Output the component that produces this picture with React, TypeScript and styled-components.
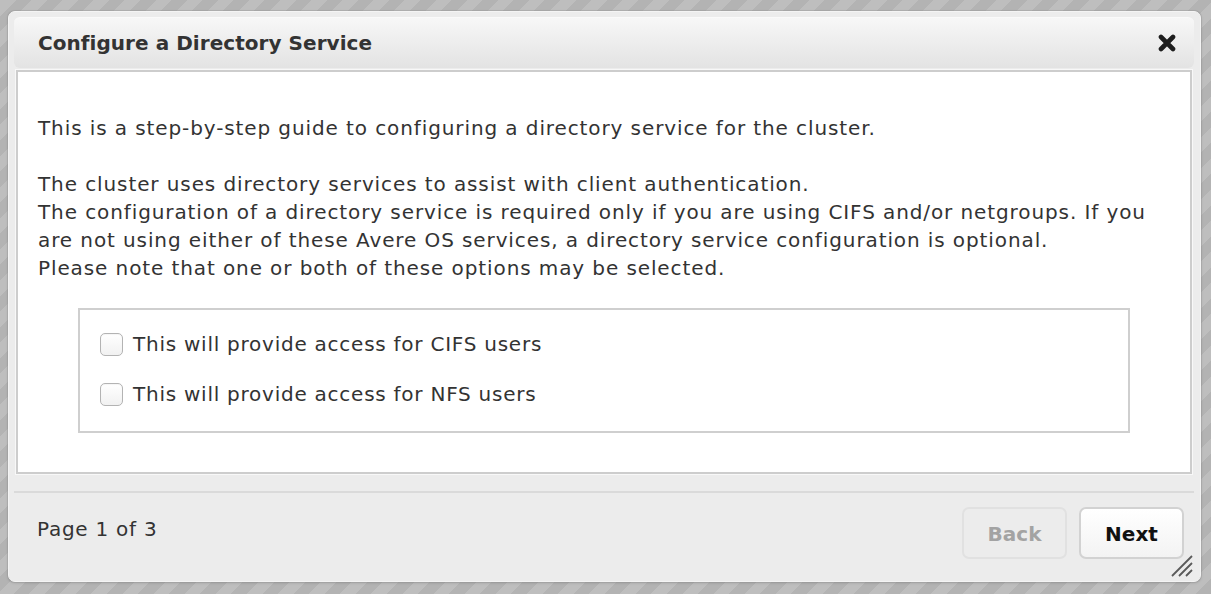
import React from "react";
import styled, { createGlobalStyle } from "styled-components";

const GlobalStyle = createGlobalStyle`
  html, body {
    margin: 0;
    padding: 0;
  }
  body {
    width: 1211px;
    height: 594px;
    overflow: hidden;
    font-family: "DejaVu Sans", "Liberation Sans", sans-serif;
    background-color: #b6b6b6;
    background-image: repeating-linear-gradient(
      -45deg,
      #b3b3b3 0px,
      #b3b3b3 11px,
      #bebebe 11px,
      #bebebe 22px
    );
  }
`;

const Page = styled.div`
  padding: 11px 10px 0 8px;
`;

const Dialog = styled.div`
  width: 1193px;
  height: 571px;
  box-sizing: border-box;
  background: #ececec;
  border: 1px solid #f4f4f4;
  border-radius: 7px;
  box-shadow: 0 0 0 1px rgba(150, 150, 150, 0.35), 0 1px 3px rgba(0, 0, 0, 0.15);
  padding: 5px 6px 0 5px;
  display: flex;
  flex-direction: column;
`;

const TitleBar = styled.div`
  height: 51px;
  box-sizing: border-box;
  display: flex;
  align-items: center;
  justify-content: space-between;
  padding: 0 18px 0 24px;
  border-radius: 6px;
  background: linear-gradient(#f7f7f7, #e3e3e3);
  border-top: 1px solid #fafafa;
`;

const Title = styled.h1`
  margin: 0;
  font-size: 20px;
  font-weight: bold;
  color: #333;
  letter-spacing: 0.05px;
`;

const CloseButton = styled.button`
  border: 0;
  padding: 0;
  background: none;
  width: 18px;
  height: 18px;
  display: flex;
  cursor: pointer;
`;

const Content = styled.div`
  margin: 2px 2px 0 2px;
  height: 404px;
  box-sizing: border-box;
  background: #fff;
  border: 2px solid #cdcdcd;
  box-shadow: 0 0 0 1px #f8f8f8;
  padding: 42px 20px 0 20px;
  color: #333;
  font-size: 20px;
  line-height: 28px;
  letter-spacing: 0.9px;
`;

const Para = styled.p<{ $gap?: number }>`
  margin: 0 0 ${(p) => p.$gap ?? 28}px 0;
  white-space: nowrap;
`;

const OptionBox = styled.div`
  margin: 0 40px 0 40px;
  border: 2px solid #cfcfcf;
  padding: 19px 20px 22px 20px;
  display: flex;
  flex-direction: column;
  gap: 20px;
`;

const OptionRow = styled.label`
  height: 30px;
  display: flex;
  align-items: center;
  gap: 10px;
  font-size: 20px;
  letter-spacing: 0.75px;
  color: #333;
  cursor: pointer;
`;

const Check = styled.input.attrs({ type: "checkbox" })`
  appearance: none;
  -webkit-appearance: none;
  margin: 0;
  width: 23px;
  height: 23px;
  box-sizing: border-box;
  border: 1px solid #b3b3b3;
  border-radius: 5px;
  background: linear-gradient(#ffffff, #f1f1f1);
  box-shadow: inset 0 1px 1px rgba(0, 0, 0, 0.04);
  flex: none;
`;

const Footer = styled.div`
  margin-top: 17px;
  border-top: 2px solid #dadada;
  flex: 1;
  display: flex;
  align-items: flex-start;
  justify-content: space-between;
  padding: 14px 10px 0 23px;
  position: relative;
`;

const PageInfo = styled.div`
  font-size: 20px;
  color: #333;
  letter-spacing: 0.75px;
  margin-top: 10px;
`;

const Buttons = styled.div`
  display: flex;
  gap: 12px;
`;

const Button = styled.button<{ $disabled?: boolean }>`
  width: 105px;
  height: 52px;
  flex: none;
  box-sizing: border-box;
  border-radius: 7px;
  font-family: "DejaVu Sans", "Liberation Sans", sans-serif;
  font-size: 20px;
  font-weight: bold;
  letter-spacing: 0px;
  padding: 2px 0 0 0;
  cursor: ${(p) => (p.$disabled ? "default" : "pointer")};
  color: ${(p) => (p.$disabled ? "#a3a3a3" : "#111")};
  border: 2px solid ${(p) => (p.$disabled ? "#e1e1e1" : "#d2d2d2")};
  background: ${(p) =>
    p.$disabled ? "#ececec" : "linear-gradient(#ffffff, #f3f3f3)"};
`;

const Grip = styled.svg`
  position: absolute;
  right: 1px;
  bottom: 4px;
`;

export default function App() {
  return (
    <Page>
      <GlobalStyle />
      <Dialog>
        <TitleBar>
          <Title>Configure a Directory Service</Title>
          <CloseButton aria-label="Close">
            <svg width="18" height="18" viewBox="0 0 18 18">
              <path
                d="M3 3 L15 15 M15 3 L3 15"
                stroke="#1e1e1e"
                strokeWidth="4.6"
                strokeLinecap="round"
              />
            </svg>
          </CloseButton>
        </TitleBar>
        <Content>
          <Para>
            This is a step-by-step guide to configuring a directory service for
            the cluster.
          </Para>
          <Para $gap={26}>
            The cluster uses directory services to assist with client
            authentication.
            <br />
            The configuration of a directory service is required only if you are
            using CIFS and/or netgroups. If you
            <br />
            are not using either of these Avere OS services, a directory service
            configuration is optional.
            <br />
            Please note that one or both of these options may be selected.
          </Para>
          <OptionBox>
            <OptionRow>
              <Check />
              This will provide access for CIFS users
            </OptionRow>
            <OptionRow>
              <Check />
              This will provide access for NFS users
            </OptionRow>
          </OptionBox>
        </Content>
        <Footer>
          <PageInfo>Page 1 of 3</PageInfo>
          <Buttons>
            <Button $disabled disabled>
              Back
            </Button>
            <Button>Next</Button>
          </Buttons>
          <Grip width="22" height="23" viewBox="0 0 22 23">
            <path
              d="M1 22 L21 2 M8 22 L21 9 M15 22 L21 16"
              stroke="#5a5a5a"
              strokeWidth="1.8"
            />
          </Grip>
        </Footer>
      </Dialog>
    </Page>
  );
}
